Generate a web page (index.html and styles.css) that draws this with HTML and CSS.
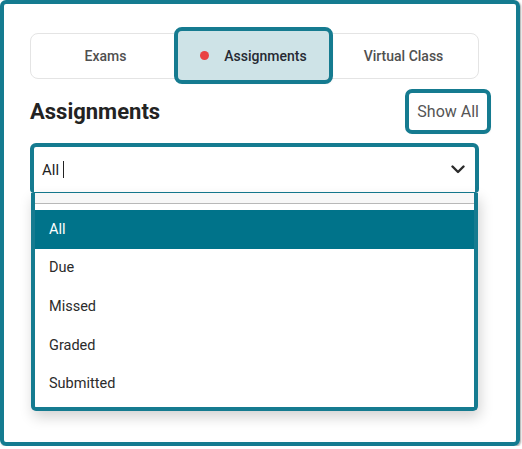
FILE: index.html
```html
<!DOCTYPE html>
<html lang="en">
<head>
    <meta charset="UTF-8">
    <meta name="viewport" content="width=device-width, initial-scale=1.0">
    <title>Assignments</title>
    <link rel="stylesheet" href="styles.css">
</head>
<body>
    <div class="panel">
        <div class="tabs">
            <button class="tab">Exams</button>
            <button class="tab active"><span class="dot"></span>Assignments</button>
            <button class="tab">Virtual Class</button>
        </div>

        <div class="header">
            <h2>Assignments</h2>
            <button class="show-all">Show All</button>
        </div>

        <div class="filter">
            <div class="select">
                <span class="value">All</span><span class="caret"></span>
                <svg class="chevron" width="14" height="9" viewBox="0 0 14 9">
                    <path d="M1.5 1.5 L7 7 L12.5 1.5" fill="none" stroke="#2b2b2b" stroke-width="2.4" stroke-linecap="round" stroke-linejoin="round"/>
                </svg>
            </div>
            <ul class="options">
                <li class="selected">All</li>
                <li>Due</li>
                <li>Missed</li>
                <li>Graded</li>
                <li>Submitted</li>
            </ul>
        </div>
    </div>
</body>
</html>
```

FILE: styles.css
```css
* {
    box-sizing: border-box;
}

body {
    margin: 0;
    background: #fff;
    font-family: Roboto, "Liberation Sans", sans-serif;
    color: #2a2a2a;
}

.panel {
    width: 520px;
    height: 446px;
    border: 4px solid #157b90;
    border-radius: 6px;
    box-shadow: 1px 1px 2px rgba(0, 0, 0, 0.35);
    padding: 29px 37px 0 26px;
}

/* tab switcher */
.tabs {
    display: flex;
    height: 46px;
    border: 1px solid #e4e4e4;
    border-radius: 8px;
}

.tab {
    flex: 1;
    border: none;
    background: none;
    font-family: inherit;
    font-size: 14px;
    font-weight: 500;
    color: #505050;
    display: flex;
    align-items: center;
    justify-content: center;
}

.tab.active {
    flex: 0 0 151px;
    margin: -3px 0 -2px -2px;
    background: #cee3e7;
    color: #262a33;
    border-radius: 4px;
    outline: 4px solid #157b90;
    box-shadow: 2px 2px 3px rgba(0, 0, 0, 0.3);
}

.dot {
    width: 9px;
    height: 9px;
    border-radius: 50%;
    background: #e94343;
    margin-right: 15px;
}

/* heading row */
.header {
    display: flex;
    justify-content: space-between;
    align-items: center;
    margin: 14px -12px 0 0;
}

.header h2 {
    margin: 0;
    font-size: 22px;
    font-weight: 700;
    color: #232323;
}

.show-all {
    height: 37px;
    margin-right: 4px;
    padding: 0 8px;
    border: none;
    border-radius: 3px;
    background: #fff;
    font-family: inherit;
    font-size: 16px;
    color: #555;
    outline: 4px solid #157b90;
    box-shadow: 2px 2px 3px rgba(0, 0, 0, 0.3);
}

/* dropdown filter */
.filter {
    position: relative;
    margin-top: 13px;
}

.select {
    height: 50px;
    display: flex;
    align-items: center;
    padding: 0 10px 0 8px;
    border: 4px solid #157b90;
    border-bottom-width: 1px;
    border-radius: 6px 6px 4px 4px;
    font-size: 15px;
    color: #1e1e1e;
}

.caret {
    width: 1px;
    height: 17px;
    background: #222;
    margin-left: 4px;
}

.chevron {
    margin-left: auto;
}

.options {
    position: absolute;
    top: 50px;
    left: 1px;
    right: 1px;
    margin: 0;
    padding: 0 0 4px 0;
    list-style: none;
    background: #fff;
    border: 4px solid #157b90;
    border-top: none;
    border-radius: 0 0 5px 5px;
    box-shadow: 2px 6px 14px rgba(0, 0, 0, 0.18);
}

.options::before {
    content: "";
    display: block;
    height: 10px;
    background: #f7f7f7;
    border-bottom: 1px solid #b8b8b8;
    margin-bottom: 6px;
}

.options li {
    height: 38.6px;
    display: flex;
    align-items: center;
    padding-left: 14px;
    font-size: 14.5px;
    color: #2b2b2b;
}

.options li.selected {
    background: #00738a;
    color: #fff;
}
```
